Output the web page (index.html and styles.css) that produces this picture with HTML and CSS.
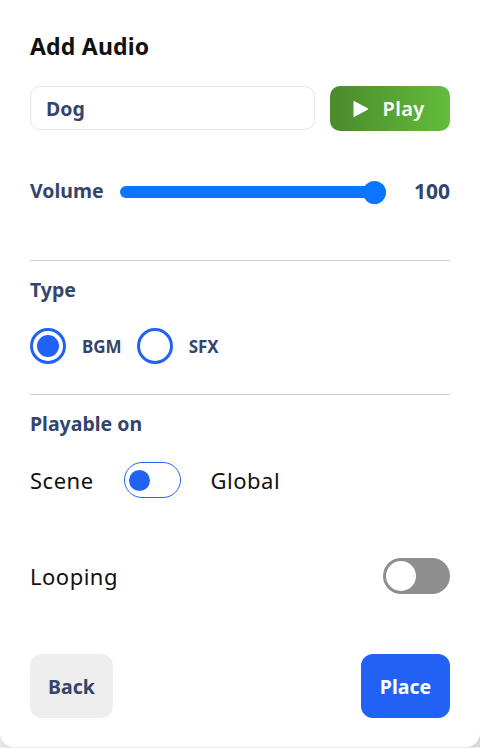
FILE: index.html
```html
<!DOCTYPE html>
<html>
    <head>
        <title>Add Audio</title>
        <link rel="stylesheet" href="styles.css">
    </head>
    <body>
        <div class="card">
            <h2 class="title">Add Audio</h2>

            <div class="name-row">
                <input type="text" class="name-input" value="Dog">
                <button class="play-btn">
                    <svg width="17" height="18" viewBox="0 0 17 18">
                        <path d="M1.5 1.8 Q1.5 0.6 2.6 1.2 L15.6 8.2 Q16.6 9 15.6 9.8 L2.6 16.8 Q1.5 17.4 1.5 16.2 Z" fill="#fff"/>
                    </svg>
                    <span>Play</span>
                </button>
            </div>

            <div class="volume-row">
                <span class="label">Volume</span>
                <input type="range" class="volume" min="0" max="100" value="100">
                <span class="volume-value">100</span>
            </div>

            <hr class="divider first">

            <div class="label section">Type</div>
            <div class="radio-row">
                <label class="radio checked"><span class="dot"></span></label>
                <span class="radio-text">BGM</span>
                <label class="radio"><span class="dot"></span></label>
                <span class="radio-text">SFX</span>
            </div>

            <hr class="divider">

            <div class="label section">Playable on</div>
            <div class="scope-row">
                <span class="plain">Scene</span>
                <span class="switch outline"><span class="knob"></span></span>
                <span class="plain">Global</span>
            </div>

            <div class="loop-row">
                <span class="plain">Looping</span>
                <span class="switch grey"><span class="knob"></span></span>
            </div>

            <div class="actions">
                <button class="back-btn">Back</button>
                <button class="place-btn">Place</button>
            </div>
        </div>
    </body>
</html>
```

FILE: styles.css
```css
body {
    margin: 0;
    background-color: #ececec;
    font-family: "Noto Sans", "Open Sans", sans-serif;
}
.card {
    box-sizing: border-box;
    width: 480px;
    height: 747px;
    padding: 31px 30px 0;
    background: white;
    border-radius: 0 0 14px 14px;
    box-shadow: 6px 4px 18px rgba(0, 0, 0, 0.14);
}
.title {
    margin: 0;
    height: 30px;
    line-height: 30px;
    font-size: 23px;
    font-weight: 700;
    letter-spacing: 0.2px;
    color: #111;
}
.label {
    font-size: 19.5px;
    font-weight: 700;
    color: #34446b;
}
.name-row {
    display: flex;
    gap: 15px;
    margin-top: 25px;
    height: 45px;
}
.name-input {
    box-sizing: border-box;
    width: 285px;
    height: 44px;
    padding: 0 15px;
    border: 1px solid #e3e3e3;
    border-radius: 10px;
    font-family: inherit;
    font-size: 19.5px;
    font-weight: 700;
    color: #34446b;
    outline: none;
}
.play-btn {
    display: flex;
    align-items: center;
    justify-content: center;
    gap: 14px;
    width: 120px;
    height: 45px;
    padding: 0 4px 0 0;
    border: none;
    border-radius: 10px;
    background: linear-gradient(90deg, #4a8a2b, #64bc3c);
    color: white;
    font-family: inherit;
    font-size: 20px;
    font-weight: 600;
    letter-spacing: 0.3px;
}
.volume-row {
    display: grid;
    grid-template-columns: 90px 266px 1fr;
    align-items: center;
    margin-top: 49px;
    height: 24px;
}
.volume-row .label,
.volume-value {
    line-height: 24px;
    margin-top: -3px;
}
.volume-value {
    text-align: right;
    font-size: 21px;
    font-weight: 700;
    color: #34446b;
}
.volume {
    -webkit-appearance: none;
    appearance: none;
    width: 266px;
    height: 24px;
    margin: 0;
    background: transparent;
}
.volume::-webkit-slider-runnable-track {
    height: 12px;
    border-radius: 6px;
    background: #0a75ff;
}
.volume::-webkit-slider-thumb {
    -webkit-appearance: none;
    width: 23px;
    height: 23px;
    margin-top: -5.5px;
    border-radius: 50%;
    background: #0a75ff;
}
.divider {
    margin: 30px 0 0;
    border: none;
    border-top: 1px solid #cfcfcf;
}
.divider.first {
    margin-top: 56px;
}
.section {
    margin-top: 17px;
    height: 24px;
    line-height: 24px;
}
.radio-row {
    display: flex;
    align-items: center;
    margin-top: 26px;
    height: 36px;
}
.radio {
    box-sizing: border-box;
    display: flex;
    align-items: center;
    justify-content: center;
    width: 36px;
    height: 36px;
    border: 3px solid #2162f5;
    border-radius: 50%;
}
.radio.checked .dot {
    width: 22px;
    height: 22px;
    border-radius: 50%;
    background: #2162f5;
}
.radio-text {
    margin: 0 15px 0 16px;
    font-size: 17px;
    font-weight: 700;
    color: #34446b;
}
.scope-row {
    display: flex;
    align-items: center;
    gap: 30px;
    margin-top: 26px;
    height: 36px;
}
.plain {
    font-size: 22px;
    letter-spacing: 0.5px;
    color: #111;
}
.switch {
    box-sizing: border-box;
    display: flex;
    align-items: center;
    border-radius: 18px;
}
.switch.outline {
    width: 57px;
    height: 36px;
    padding: 0 4px;
    border: 1px solid #2162f5;
}
.switch.outline .knob {
    width: 21px;
    height: 21px;
    border-radius: 50%;
    background: #2162f5;
}
.switch.grey {
    width: 67px;
    height: 36px;
    padding: 0 3px;
    background: #8e8e8e;
}
.switch.grey .knob {
    width: 30px;
    height: 30px;
    border-radius: 50%;
    background: white;
}
.loop-row {
    display: flex;
    align-items: center;
    justify-content: space-between;
    margin-top: 60px;
    height: 36px;
}
.actions {
    display: flex;
    justify-content: space-between;
    margin-top: 60px;
}
.actions button {
    height: 64px;
    border: none;
    border-radius: 12px;
    font-family: inherit;
    font-size: 19.5px;
    font-weight: 700;
}
.back-btn {
    width: 83px;
    background: #eeeeee;
    color: #34446b;
}
.place-btn {
    width: 89px;
    background: #2162f5;
    color: white;
}
```
